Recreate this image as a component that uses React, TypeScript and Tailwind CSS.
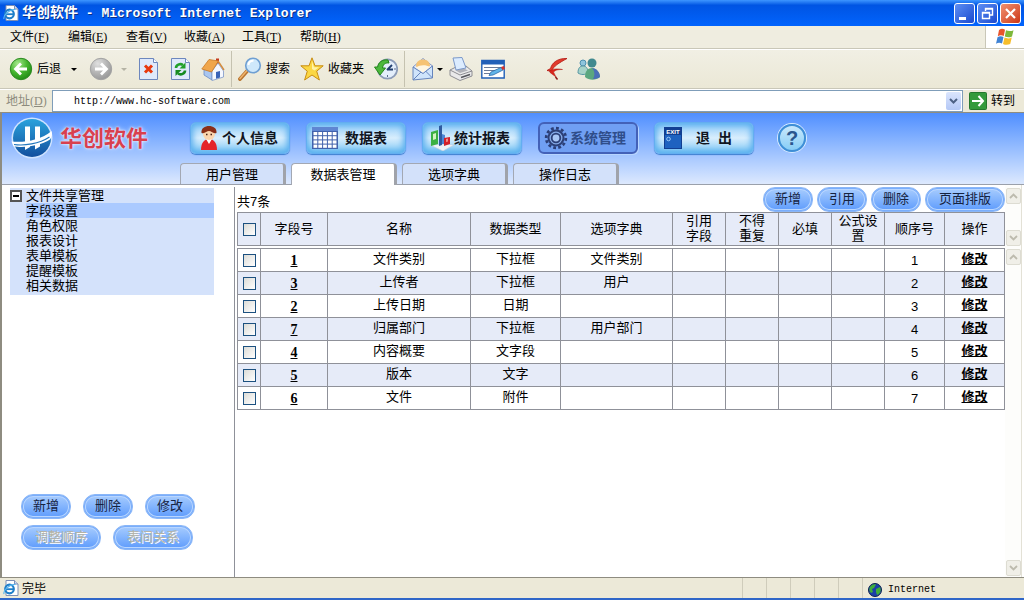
import type { ReactNode } from "react";
import clsx from "clsx";

const menus = [
  { name: "文件", mnemonic: "F" },
  { name: "编辑", mnemonic: "E" },
  { name: "查看", mnemonic: "V" },
  { name: "收藏", mnemonic: "A" },
  { name: "工具", mnemonic: "T" },
  { name: "帮助", mnemonic: "H" },
];

const tabs = ["用户管理", "数据表管理", "选项字典", "操作日志"];

const treeItems = ["字段设置", "角色权限", "报表设计", "表单模板", "提醒模板", "相关数据"];

const columns = [
  { title: "字段号", width: "w-[67px]" },
  { title: "名称", width: "" },
  { title: "数据类型", width: "w-[90px]" },
  { title: "选项字典", width: "w-[112px]" },
  { title: "引用\n字段", width: "w-[53px]" },
  { title: "不得\n重复", width: "w-[53px]" },
  { title: "必填", width: "w-[53px]" },
  { title: "公式设置", width: "w-[53px]" },
  { title: "顺序号", width: "w-[60px]" },
  { title: "操作", width: "w-[60px]" },
];

const fields = [
  { id: 1, name: "文件类别", type: "下拉框", dict: "文件类别" },
  { id: 3, name: "上传者", type: "下拉框", dict: "用户" },
  { id: 2, name: "上传日期", type: "日期", dict: "" },
  { id: 7, name: "归属部门", type: "下拉框", dict: "用户部门" },
  { id: 4, name: "内容概要", type: "文字段", dict: "" },
  { id: 5, name: "版本", type: "文字", dict: "" },
  { id: 6, name: "文件", type: "附件", dict: "" },
];

/* ---------- icons ---------- */

const PageIcon = ({ className = "w-4 h-4" }: { className?: string }) => (
  <svg viewBox="0 0 16 16" className={className} aria-hidden="true">
    <path d="M3 .5h8.500l3.500 3.500v11.500H3z" fill="#fff" stroke="#7d8fb5" />
    <path d="M11.500.5v3.500h3.500" fill="#cddcf5" stroke="#7d8fb5" />
    <circle cx="6.500" cy="9" r="4.300" fill="none" stroke="#1f7fc9" strokeWidth="2.200" />
    <path d="M3 9.200h7.500" stroke="#1f7fc9" strokeWidth="1.800" />
    <path d="M1 14C0 10 7 4 12.500 4.500" fill="none" stroke="#58b6f0" strokeWidth="1.200" />
  </svg>
);

const Caret = ({ muted = false }: { muted?: boolean }) => (
  <svg viewBox="0 0 10 10" className="w-2.5 h-2.5 shrink-0" aria-hidden="true">
    <path d="M2 4h6L5 7z" fill={muted ? "#b5b3a5" : "#000"} />
  </svg>
);

const RoundArrow = ({ forward = false }: { forward?: boolean }) => (
  <svg viewBox="0 0 24 24" className="w-6 h-6" aria-hidden="true">
    <defs>
      <radialGradient id={forward ? "fwdFill" : "backFill"} cx="35%" cy="25%" r="80%">
        <stop offset="0" stopColor={forward ? "#e0e0e0" : "#a5e88c"} />
        <stop offset=".55" stopColor={forward ? "#b4b4b4" : "#45b52f"} />
        <stop offset="1" stopColor={forward ? "#969696" : "#1f8a14"} />
      </radialGradient>
    </defs>
    <circle
      cx="12"
      cy="12"
      r="10.700"
      fill={forward ? "url(#fwdFill)" : "url(#backFill)"}
      stroke={forward ? "#a3a3a3" : "#2c8a22"}
    />
    <path
      d={forward ? "M6 12h11M12 6.500l5.500 5.500-5.500 5.500" : "M18 12H7M12 6.500L6.500 12l5.500 5.500"}
      fill="none"
      stroke="#fff"
      strokeWidth="2.800"
    />
  </svg>
);

const StopIcon = () => (
  <svg viewBox="0 0 24 24" className="w-6 h-6" aria-hidden="true">
    <path d="M2.500 1.500h14l4 4v17h-18z" fill="#dfe9fb" stroke="#6d87be" />
    <path d="M16.500 1.500v4h4" fill="#fff" stroke="#6d87be" />
    <path d="M8 8.500l7 7M15 8.500l-7 7" stroke="#e8380d" strokeWidth="3" />
  </svg>
);

const RefreshIcon = () => (
  <svg viewBox="0 0 24 24" className="w-6 h-6" aria-hidden="true">
    <path d="M2.500 1.500h14l4 4v17h-18z" fill="#dfe9fb" stroke="#6d87be" />
    <path d="M16.500 1.500v4h4" fill="#fff" stroke="#6d87be" />
    <path d="M7 11c0-3 4-5 7-3" fill="none" stroke="#22a02b" strokeWidth="2.600" />
    <path d="M16.500 5.500v6h-6z" fill="#22a02b" />
    <path d="M16 13.500c0 3-4 5-7 3" fill="none" stroke="#158a20" strokeWidth="2.600" />
    <path d="M6.500 19v-6h6z" fill="#158a20" />
  </svg>
);

const HomeIcon = () => (
  <svg viewBox="0 0 24 24" className="w-6 h-6" aria-hidden="true">
    <path d="M15 1.500h3v6h-3z" fill="#c43a1d" />
    <path d="M3 11l8 4v8l-8-5z" fill="#a9c6f0" stroke="#6b8cc4" strokeWidth=".8" />
    <path d="M11 14l6-8 5.500 8v6L11 23.500z" fill="#f5f8ff" stroke="#7c97c8" strokeWidth=".8" />
    <path d="M.8 12L8 2.500l9.500 1.500-7 11z" fill="#f0a64b" stroke="#c97a26" strokeWidth=".8" />
    <path d="M17 4l6 9" stroke="#d48b3c" strokeWidth="1.400" />
    <path d="M15 15l4-1v6.500l-4 1.300z" fill="#3a63b8" />
  </svg>
);

const SearchIcon = () => (
  <svg viewBox="0 0 24 24" className="w-6 h-6" aria-hidden="true">
    <path d="M2 22l8-9" stroke="#b9742f" strokeWidth="3.800" strokeLinecap="round" />
    <path d="M2 21.500l7-8" stroke="#efb56d" strokeWidth="1.500" strokeLinecap="round" />
    <circle cx="15" cy="8.500" r="7.300" fill="#cfe8fb" stroke="#6f9fd2" strokeWidth="1.600" />
    <path d="M10.500 8c0-3 2.500-4.500 5-4.300" fill="none" stroke="#fff" strokeWidth="2" />
  </svg>
);

const StarIcon = () => (
  <svg viewBox="0 0 24 24" className="w-6 h-6" aria-hidden="true">
    <path
      d="M12 .8l3 8h8.200l-6.500 5.400 2.700 8.800L12 18l-7.400 5 2.700-8.800L.8 8.800H9z"
      fill="#fbd743"
      stroke="#c98d12"
      strokeLinejoin="round"
    />
    <path d="M12 4l2 6.300h5l-4.500 3.200L12 12z" fill="#fff3a8" />
  </svg>
);

const HistoryIcon = () => (
  <svg viewBox="0 0 24 24" className="w-6 h-6" aria-hidden="true">
    <circle cx="13.500" cy="12" r="9.700" fill="#e3eefb" stroke="#8c9cb8" strokeWidth="1.800" />
    <path d="M20 12h2M13.500 18v2M13.500 4v2" stroke="#5a6b8c" />
    <path d="M13 13l5-5M13 12.500h6" stroke="#24406f" strokeWidth="1.800" />
    <path d="M14 3C8 2 4 6 3.700 10H.5l5.500 8 5.500-7H8.500C9 7.500 11 5.500 15 6z" fill="#4cb83c" stroke="#24851b" />
  </svg>
);

const MailIcon = () => (
  <svg viewBox="0 0 24 24" className="w-6 h-6" aria-hidden="true">
    <path d="M2 10L12 1.500l9.500 7.500-9.500 8z" fill="#e4eaf6" stroke="#8296c4" />
    <path d="M5 9.500C5 4 9 2.500 12 2.500s7 2 7 6.500l-7 4z" fill="#f6c373" />
    <path d="M5 10.500c4-3 10-3 14-.5l-7 5.500z" fill="#fff6e0" />
    <path d="M2 10l10 6.500 9.500-7.500v12L2 23z" fill="#cfe4fb" stroke="#6685bd" />
    <path d="M2 23l8-8M21.500 21l-7-7" stroke="#6685bd" />
  </svg>
);

const PrinterIcon = () => (
  <svg viewBox="0 0 24 24" className="w-6 h-6" aria-hidden="true">
    <path d="M1 13l6-3 10-1 6 5v5l-12 4.500-10-5z" fill="#e9e9ea" stroke="#8d8d92" />
    <path d="M1 13l10 5 12-4" fill="none" stroke="#8d8d92" />
    <path d="M6 13l8-2 5 2.500-8 2.500z" fill="#b0b1b8" />
    <path d="M4 1l9-.5L17 11 7 13z" fill="#dcecff" stroke="#7b98c9" />
    <path d="M12 20.500l9-3" stroke="#55565c" strokeWidth="1.600" />
  </svg>
);

const EditIcon = () => (
  <svg viewBox="0 0 24 24" className="w-6 h-6" aria-hidden="true">
    <path d="M.8 3.500h22.400v17.500H.8z" fill="#fff" stroke="#2160b8" strokeWidth="1.400" />
    <path d="M.8 3h22.400v4.500H.8z" fill="#2160b8" />
    <path d="M3 10.500h18M3 13.500h12M3 16.500h6" stroke="#6b7c99" />
    <path d="M8 18.500l2-3.500 10-4.500 2 2.500-10 5z" fill="#62b5e8" stroke="#2b6aa8" strokeWidth=".8" />
    <path d="M20 10l3-1 1 3-2.500 1z" fill="#d6342b" />
  </svg>
);

const BirdIcon = () => (
  <svg viewBox="0 0 24 24" className="w-6 h-6" aria-hidden="true">
    <path d="M22 1.500C13 1 7 5.500 5.500 11.500L2 13.500l4.500.8C8.500 9 14 6 22 1.500z" fill="#e23a2c" stroke="#b11610" strokeWidth=".8" />
    <path d="M4.500 14c4-2.500 8-2.500 13-1.500-5 0-7.500.8-9 2.500l2.500 5-6-4.500z" fill="#d9261c" stroke="#b11610" strokeWidth=".5" />
    <path d="M10.500 20l2 2.500" stroke="#8c1a14" strokeWidth="1.500" />
  </svg>
);

const MessengerIcon = () => (
  <svg viewBox="0 0 24 24" className="w-6 h-6" aria-hidden="true">
    <circle cx="6" cy="6" r="3" fill="#8ec5dd" stroke="#4d8fae" />
    <path d="M1 16c0-5 2-7 5-7s5 2 5 7c-3 2-7 2-10 0z" fill="#a6d3c8" stroke="#5897a5" />
    <circle cx="15" cy="6" r="4.500" fill="#41898f" />
    <path d="M8 20c0-6 3-9 7-9s8 4 8 9c-4 3.500-11 3.500-15 0z" fill="#5aa77f" />
    <path d="M15 11c4 0 8 4 8 9-2 1.500-5 2-7 2 2-3 2-8-1-11z" fill="#4a6fb8" />
  </svg>
);

const WindowsFlag = () => (
  <svg viewBox="0 0 20 18" className="w-5 h-[18px]" aria-hidden="true">
    <path d="M4 2c2-1.500 4-1.500 6-.3L8.800 8c-2-1-4-1-6 .2z" fill="#e8542b" />
    <path d="M11 2.200c2 1 5 1.200 7.500 0L17 8.500c-2.500 1.200-5 1-7.200 0z" fill="#7db83a" />
    <path d="M2.500 9.300c2-1.300 4-1.200 6-.2L7 15.500c-2-1-4-1-6 .3z" fill="#3f82d4" />
    <path d="M9.500 9.600c2.200 1 5 1.200 7.300 0L15.200 16c-2.400 1.100-5 1-7.200-.1z" fill="#f6bd2b" />
  </svg>
);

const BrandMark = () => (
  <svg viewBox="0 0 44 44" className="w-11 h-11 shrink-0" aria-hidden="true">
    <defs>
      <linearGradient id="brandFill" x1="0" y1="0" x2="0" y2="1">
        <stop offset="0" stopColor="#2aa2dc" />
        <stop offset="1" stopColor="#124f9e" />
      </linearGradient>
    </defs>
    <circle cx="22" cy="22" r="20.500" fill="#cfe3ff" />
    <circle cx="22" cy="22" r="19" fill="url(#brandFill)" />
    <path d="M15 10.500h5V31l-5 3zM25 10.500h5v20l-5 3z" fill="#fff" />
    <path d="M1.500 25.500C14 27 31 24 41.500 15c1 3 .5 6-1.500 8.500C30 30 12 32.500 3.500 30z" fill="#fff" />
    <path d="M4 28.500C14 30 29 28 39.500 21" fill="none" stroke="#2277bd" strokeWidth="1.200" />
  </svg>
);

const PersonIcon = () => (
  <svg viewBox="0 0 20 26" className="w-5 h-6.5" aria-hidden="true">
    <path d="M2 25c0-7 3-11 8-11s8 4 8 11z" fill="#e4242b" />
    <path d="M7 14l3 5 3-5z" fill="#fff" />
    <ellipse cx="10" cy="9" rx="6" ry="6" fill="#fbd5ae" />
    <path d="M2.500 8C2 3 6 1 10 1s8 2 7.500 7c-4 1-5-2-7.500-2s-4 3-7.500 2z" fill="#8a2f17" />
    <path d="M7 9.500h1.500M11.500 9.500H13" stroke="#4a2315" strokeWidth="1.300" />
  </svg>
);

const GridIcon = () => (
  <svg viewBox="0 0 26 22" className="w-6.5 h-[22px] shrink-0" aria-hidden="true">
    <path d="M0 0h26v22H0z" fill="#4162ac" />
    <path d="M0 0h26v4H0z" fill="#5f86d2" />
    {[5, 9.2, 13.4, 17.6].map((y) =>
      [1.5, 6.3, 11.1, 15.9, 20.7].map((x) => (
        <rect key={`${x}-${y}`} x={x} y={y} width="3.800" height="3.200" fill="#fff" />
      ))
    )}
  </svg>
);

const ChartIcon = () => (
  <svg viewBox="0 0 26 26" className="w-6.5 h-6.5 shrink-0" aria-hidden="true">
    <path d="M2 20l13 6 11-6-9-1z" fill="#eef3f8" stroke="#b8cadb" strokeWidth=".6" />
    <path d="M3 7l7-2v14l-7 2z" fill="#3cb043" />
    <path d="M5 9l3-1v6l-3 1z" fill="#d4f2c4" />
    <path d="M11 1l3-1v20l-3 1z" fill="#2f5ba0" />
    <path d="M14 9l3 1v9h-3z" fill="#4c86d6" />
    <path d="M16 13l6-1v7l-6 2z" fill="#d3202a" />
    <path d="M18 14l2-.5v3l-2 .5z" fill="#f38c86" />
  </svg>
);

const GearIcon = () => (
  <svg viewBox="0 0 24 24" className="w-6 h-6 shrink-0" aria-hidden="true">
    <circle cx="12" cy="12" r="9.800" fill="none" stroke="#2c3f77" strokeWidth="2.800" strokeDasharray="2.800 2.300" />
    <circle cx="12" cy="12" r="7.500" fill="#86abe8" stroke="#2c3f77" strokeWidth="2" />
    <circle cx="12" cy="12" r="4.300" fill="#a9c6f5" stroke="#2c3f77" strokeWidth="1.800" />
  </svg>
);

const ExitIcon = () => (
  <svg viewBox="0 0 18 22" className="w-[18px] h-[22px]" aria-hidden="true">
    <path d="M0 0h18v22H0z" fill="#123f92" />
    <path d="M1 8h16v13H1z" fill="#1e62c0" />
    <circle cx="4.500" cy="12" r="1.800" fill="none" stroke="#9cc8f5" />
    <text x="9" y="7" textAnchor="middle" fontSize="6" fontWeight="bold" fill="#fff">
      EXIT
    </text>
  </svg>
);

const GlobeIcon = () => (
  <svg viewBox="0 0 14 14" className="w-3.5 h-3.5" aria-hidden="true">
    <circle cx="7" cy="7" r="6.500" fill="#1b3fa8" stroke="#0b1f4e" />
    <path d="M2 4c2-3 5-3 6-2.500L6 5 4 6l1 3-2 1C1 8 1 6 2 4z" fill="#3fae3a" />
    <path d="M8 6l4-2c1 2 1 5-1 7l-2 1-1-3z" fill="#3fae3a" />
  </svg>
);

/* ---------- small controls ---------- */

const Mnemonic = ({ letter }: { letter: string }) => (
  <span className="font-['Liberation_Serif',serif]">
    (<u>{letter}</u>)
  </span>
);

const Separator = () => <span className="w-px h-9 mx-1.5 bg-[#c5c2b0]" />;

const ToolButton = ({ label, className, children }: { label: string; className?: string; children: ReactNode }) => (
  <button aria-label={label} className={clsx("flex items-center shrink-0", className)}>
    {children}
  </button>
);

const NavButton = ({ icon, children }: { icon: ReactNode; children: ReactNode }) => (
  <button className="flex items-center w-[100px] h-8 pl-1.5 pr-2.5 shrink-0 rounded-md border border-[#63aef0] bg-linear-to-b from-[#8ccaf8] via-[#d9eefd] to-[#7cc8f4] shadow-[inset_0_0_6px_2px_#57adee,0_1px_1px_#3c7fd0]">
    <span className="w-6 flex justify-center shrink-0">{icon}</span>
    <span className="flex-1 text-center text-sm font-bold text-[#10151f] whitespace-pre">{children}</span>
  </button>
);

const PillButton = ({ wide = false, disabled = false, children }: { wide?: boolean; disabled?: boolean; children: ReactNode }) => (
  <button
    disabled={disabled}
    className={clsx(
      "h-[25px] shrink-0 rounded-xl border border-[#8ab6f7] bg-linear-to-b from-[#a9cdfd] to-[#5c9afc] text-[13px] leading-5 pb-0.5",
      "shadow-[inset_0_0_0_1px_#79adfb,inset_0_0_0_2px_#b9d6ff]",
      wide ? "w-20" : "w-[50px]",
      disabled ? "text-[#b5b3a6] [text-shadow:1px_1px_0_#fff]" : "text-[#16233f]"
    )}
  >
    {children}
  </button>
);

const CheckBox = ({ label }: { label: string }) => (
  <input
    type="checkbox"
    aria-label={label}
    className="appearance-none block mx-auto size-[13px] border border-[#1c5180] bg-linear-to-br from-[#dcdcd7] to-white"
  />
);

const ScrollArrow = ({ down = false }: { down?: boolean }) => (
  <button
    disabled
    aria-label={down ? "向下滚动" : "向上滚动"}
    className="flex items-center justify-center w-[15px] h-4 rounded-xs border border-[#dddcd2] bg-[#f0efe8]"
  >
    <svg viewBox="0 0 9 6" className="w-[9px] h-1.5" aria-hidden="true">
      <path d={down ? "M1 1l3.500 3.500L8 1" : "M1 5l3.500-3.500L8 5"} fill="none" stroke="#bdbbae" strokeWidth="1.800" />
    </svg>
  </button>
);

/* ---------- browser chrome ---------- */

const TitleBar = () => (
  <div className="flex items-center h-[26px] pl-[3px] pr-[3px] bg-linear-to-b from-[#3d95ff] via-[#0054e3] via-20% to-[#0264fd] font-['Liberation_Mono','Noto_Sans_CJK_SC',monospace] font-bold text-white [text-shadow:1px_1px_0_#0a2f86]">
    <PageIcon />
    <h1 className="ml-[3px] text-[13px] whitespace-pre">
      <span className="text-sm">华创软件</span> - Microsoft Internet Explorer
    </h1>
    <div className="flex gap-0.5 ml-auto">
      <button aria-label="最小化" className="size-[21px] rounded-[3px] border border-white bg-linear-to-br from-[#5e8ef3] to-[#1c48cf]">
        <svg viewBox="0 0 19 19" aria-hidden="true">
          <path d="M4 13h7v3H4z" fill="#fff" />
        </svg>
      </button>
      <button aria-label="还原" className="size-[21px] rounded-[3px] border border-white bg-linear-to-br from-[#5e8ef3] to-[#1c48cf]">
        <svg viewBox="0 0 19 19" aria-hidden="true">
          <path d="M7.500 7V4.500h7v6.500H12M4.500 8.500h7v6h-7zM4.500 9h7M7.500 5h7" fill="none" stroke="#fff" strokeWidth="1.400" />
        </svg>
      </button>
      <button aria-label="关闭" className="size-[21px] rounded-[3px] border border-white bg-linear-to-br from-[#f0906f] to-[#cc3310]">
        <svg viewBox="0 0 19 19" aria-hidden="true">
          <path d="M5 5l9 9M14 5l-9 9" stroke="#fff" strokeWidth="2.200" />
        </svg>
      </button>
    </div>
  </div>
);

const MenuBar = () => (
  <div className="flex h-[23px] border-b border-[#c9c7b8] bg-[#efede0]">
    <nav className="flex items-center gap-4 pl-2.5 text-xs">
      {menus.map((m) => (
        <button key={m.name} className="w-[42px] text-left whitespace-nowrap leading-5">
          {m.name}
          <Mnemonic letter={m.mnemonic} />
        </button>
      ))}
    </nav>
    <div className="flex items-center justify-center w-[39px] ml-auto border-l border-[#c9c7b8] bg-white">
      <WindowsFlag />
    </div>
  </div>
);

const ToolBar = () => (
  <div className="flex items-center h-10 pl-[9px] border-t border-b border-t-white border-b-[#c9c7b8] bg-linear-to-b from-[#f1efe4] to-[#ebe8d6] text-xs">
    <ToolButton label="后退">
      <RoundArrow />
      <span className="ml-1 mr-2">后退</span>
      <Caret />
    </ToolButton>
    <ToolButton label="前进" className="ml-2.5 gap-1.5">
      <RoundArrow forward />
      <Caret muted />
    </ToolButton>
    <ToolButton label="停止" className="ml-2">
      <StopIcon />
    </ToolButton>
    <ToolButton label="刷新" className="ml-2">
      <RefreshIcon />
    </ToolButton>
    <ToolButton label="主页" className="ml-2">
      <HomeIcon />
    </ToolButton>
    <Separator />
    <ToolButton label="搜索" className="gap-1">
      <SearchIcon />
      <span>搜索</span>
    </ToolButton>
    <ToolButton label="收藏夹" className="ml-2.5 gap-1">
      <StarIcon />
      <span>收藏夹</span>
    </ToolButton>
    <ToolButton label="历史" className="ml-2.5">
      <HistoryIcon />
    </ToolButton>
    <Separator />
    <ToolButton label="邮件">
      <MailIcon />
      <Caret />
    </ToolButton>
    <ToolButton label="打印" className="ml-1">
      <PrinterIcon />
    </ToolButton>
    <ToolButton label="编辑" className="ml-2">
      <EditIcon />
    </ToolButton>
    <ToolButton label="下载" className="ml-10">
      <BirdIcon />
    </ToolButton>
    <ToolButton label="Messenger" className="ml-2">
      <MessengerIcon />
    </ToolButton>
  </div>
);

const AddressBar = () => (
  <div className="flex items-center h-[23px] px-1.5 border-t border-white bg-[#ece9d8] text-xs">
    <label htmlFor="address" className="w-[46px] shrink-0 text-[#8d8b7d]">
      地址
      <Mnemonic letter="D" />
    </label>
    <div className="flex flex-1 h-[22px] border border-[#7f9db9] bg-white">
      <input
        id="address"
        type="text"
        defaultValue="http://www.hc-software.com"
        className="flex-1 min-w-0 pt-0.5 pl-[21px] font-['Liberation_Mono',monospace] text-[10px] outline-none"
      />
      <button aria-label="地址列表" className="flex items-center justify-center w-[15px] my-px mr-px rounded-xs bg-linear-to-b from-[#dbe5fd] to-[#b4c8f6]">
        <svg viewBox="0 0 9 6" className="w-[9px] h-1.5" aria-hidden="true">
          <path d="M1 1l3.500 3.500L8 1" fill="none" stroke="#4d6185" strokeWidth="2" />
        </svg>
      </button>
    </div>
    <button className="flex items-center gap-1 ml-1.5 mr-[3px] whitespace-nowrap">
      <svg viewBox="0 0 18 18" className="w-[18px] h-[18px]" aria-hidden="true">
        <rect x=".5" y=".5" width="17" height="17" rx="1" fill="#349a3b" stroke="#25772c" />
        <path d="M3 9h11M9.500 4L14 9l-4.500 5" fill="none" stroke="#fff" strokeWidth="2" />
      </svg>
      转到
    </button>
  </div>
);

const StatusBar = () => (
  <footer className="flex items-center h-[23px] pl-[3px] border-t border-t-[#8e8c80] border-b-2 border-b-[#2f66c8] bg-[#ece9d8] text-xs">
    <PageIcon />
    <span className="ml-[3px] pt-0.5">完毕</span>
    <div className="flex h-full ml-auto">
      {[0, 1, 2, 3, 4].map((i) => (
        <span key={i} className="w-6 border-l border-[#cfccbb]" />
      ))}
      <span className="flex items-center gap-1.5 w-[162px] pt-1 pl-[5px] border-l border-[#cfccbb] font-['Liberation_Mono',monospace] text-[10px]">
        <GlobeIcon />
        Internet
      </span>
    </div>
  </footer>
);

/* ---------- application ---------- */

const AppHeader = () => (
  <header className="border-t border-[#8e8c80] bg-linear-to-b from-[#4f8efe] to-[#dfeafd]">
    <div className="flex items-center h-[50px]">
      <div className="flex items-center gap-1.5 w-[188px] pl-2 shrink-0">
        <BrandMark />
        <span className="text-[22px] font-bold text-[#d8404f] [text-shadow:0_0_2px_#fff,0_0_4px_#dbe8ff]">华创软件</span>
      </div>
      <nav className="flex items-center gap-4">
        <NavButton icon={<PersonIcon />}>个人信息</NavButton>
        <NavButton icon={<GridIcon />}>数据表</NavButton>
        <NavButton icon={<ChartIcon />}>统计报表</NavButton>
        <button className="flex items-center gap-0.5 w-[100px] h-8 pl-1 shrink-0 rounded-md border-2 border-[#4361b8] bg-[#709ff3] text-sm font-bold text-[#2f4d8a] shadow-[1px_1px_0_#b7d5ff]">
          <GearIcon />
          系统管理
        </button>
        <NavButton icon={<ExitIcon />}>退  出</NavButton>
        <button
          aria-label="帮助"
          className="size-7 ml-2 rounded-full border-2 border-[#3f8fd6] bg-linear-to-b from-[#c9e8fc] to-[#86cdf6] text-xl leading-6 font-bold text-[#2a568f] shadow-[0_0_0_1px_#d8ecff]"
        >
          ?
        </button>
      </nav>
    </div>
    <nav className="flex gap-[5px] h-[22px] pl-[178px] border-b border-[#9aa0ab] text-[13px]">
      {tabs.map((tab) => {
        const active = tab === "数据表管理";
        return (
          <button
            key={tab}
            className={clsx(
              "w-[106px] pt-px leading-5 rounded-t-sm border-t border-l border-r-3 border-t-[#a3a8b3] border-l-[#a3a8b3] border-r-[#a0a3aa]",
              active ? "h-[22px] bg-white" : "h-[21px] bg-[#d3e1fa]"
            )}
          >
            {tab}
          </button>
        );
      })}
    </nav>
  </header>
);

const SidePanel = () => (
  <aside className="flex flex-col w-[232px] shrink-0 pt-[3px] pb-[27px] pl-2">
    <div className="w-[204px] pb-0.5 bg-[#d4e2fb] text-[13px] leading-[15px]">
      <div className="flex items-center gap-1">
        <button aria-label="折叠" className="flex items-center justify-center size-3 border-2 border-[#555] bg-white">
          <span className="w-1.5 h-0.5 bg-black" />
        </button>
        文件共享管理
      </div>
      <ul className="pl-4">
        {treeItems.map((item, i) => (
          <li key={item} className={i === 0 ? "bg-[#abcaff]" : ""}>
            <a href="#" className="block">
              {item}
            </a>
          </li>
        ))}
      </ul>
    </div>
    <div className="flex flex-col gap-1.5 mt-auto pl-[11px]">
      <div className="flex gap-3">
        <PillButton>新增</PillButton>
        <PillButton>删除</PillButton>
        <PillButton>修改</PillButton>
      </div>
      <div className="flex gap-3">
        <PillButton wide disabled>
          调整顺序
        </PillButton>
        <PillButton wide disabled>
          表间关系
        </PillButton>
      </div>
    </div>
  </aside>
);

const FieldTable = () => (
  <table className="w-full table-fixed border-collapse text-[13px] leading-[15px] text-center">
    <colgroup>
      <col className="w-[23px]" />
      {columns.map((c) => (
        <col key={c.title} className={c.width} />
      ))}
    </colgroup>
    <thead>
      <tr className="h-[33px] bg-[#e6ebf8]">
        <th className="p-0 border border-[#8f9199]">
          <CheckBox label="全选" />
        </th>
        {columns.map((c) => (
          <th key={c.title} className="px-1.5 pt-0 pb-0.5 font-normal whitespace-pre-line border border-[#8f9199]">
            {c.title}
          </th>
        ))}
      </tr>
      <tr className="h-[3px]">
        <td colSpan={11} className="p-0" />
      </tr>
    </thead>
    <tbody>
      {fields.map((f, i) => (
        <tr key={f.id} className={clsx("h-[23px] *:border *:border-[#8f9199]", i % 2 === 1 && "bg-[#e6ebf8]")}>
          <td className="p-0">
            <CheckBox label={`选择字段 ${f.id}`} />
          </td>
          <td className="p-0">
            <a href="#" className="font-['Liberation_Serif',serif] text-sm leading-[15px] font-bold underline">
              {f.id}
            </a>
          </td>
          <td className="pb-1">{f.name}</td>
          <td className="pb-1">{f.type}</td>
          <td className="pb-1">{f.dict}</td>
          <td />
          <td />
          <td />
          <td />
          <td className="p-0">{i + 1}</td>
          <td className="pb-1">
            <a href="#" className="font-bold underline">
              修改
            </a>
          </td>
        </tr>
      ))}
    </tbody>
  </table>
);

const App = () => {
  return (
    <div className="flex flex-col min-h-screen bg-white font-['Liberation_Sans','Noto_Sans_CJK_SC',sans-serif] text-black">
      <TitleBar />
      <MenuBar />
      <ToolBar />
      <AddressBar />
      <div className="flex flex-col flex-1 border-l-2 border-[#8e8c80]">
        <AppHeader />
        <main className="flex flex-1">
          <SidePanel />
          <section className="flex-1 min-w-0 mt-0.5 pl-0.5 border-l border-[#8f9199]">
            <div className="flex items-end justify-between h-[25px]">
              <p className="text-[13px] leading-5">共7条</p>
              <div className="flex gap-1">
                <PillButton>新增</PillButton>
                <PillButton>引用</PillButton>
                <PillButton>删除</PillButton>
                <PillButton wide>页面排版</PillButton>
              </div>
            </div>
            <FieldTable />
          </section>
          <div className="flex flex-col w-[17px] pt-[3px] mr-0.5 pl-px bg-[#fdfdfb] border-r border-[#e3e1d6]">
            <div className="flex flex-col justify-between h-[58px]">
              <ScrollArrow />
              <ScrollArrow down />
            </div>
            <div className="flex flex-col justify-between flex-1 pt-[3px] pb-px">
              <ScrollArrow />
              <ScrollArrow down />
            </div>
          </div>
        </main>
      </div>
      <StatusBar />
    </div>
  );
};

export default App;
